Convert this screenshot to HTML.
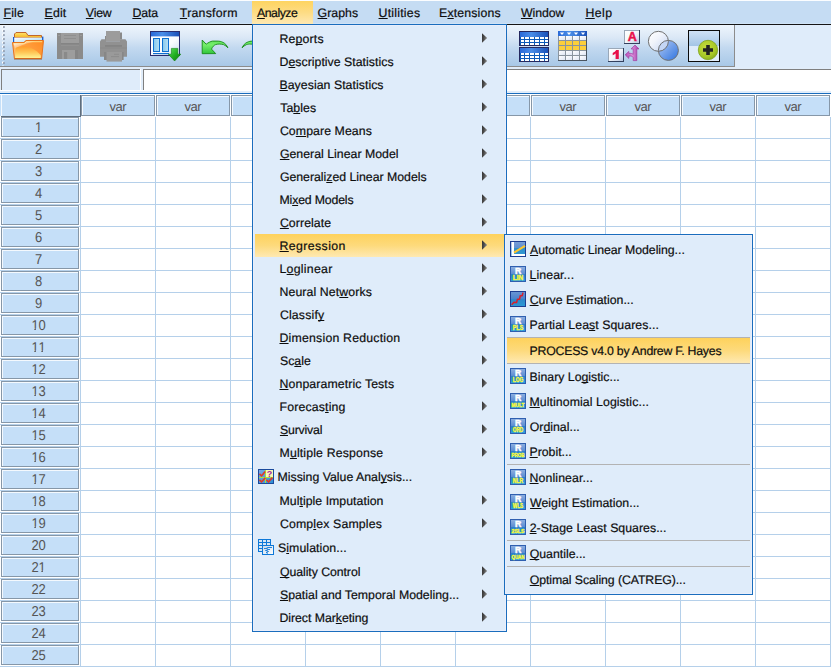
<!DOCTYPE html><html><head><meta charset="utf-8"><title>SPSS</title><style>
html,body{margin:0;padding:0;}
body{width:831px;height:667px;overflow:hidden;background:#fff;position:relative;font-family:"Liberation Sans",sans-serif;font-size:12px;color:#111;}
.a{position:absolute;}
.mb{position:absolute;left:0;top:0;width:831px;height:24px;background:#c5dcf3;}
.t{position:absolute;white-space:nowrap;text-rendering:geometricPrecision;-webkit-text-stroke:0.2px #0d0d0d;font-size:12.3px;color:#0d0d0d;}
u{text-decoration:underline;text-decoration-thickness:1px;text-underline-offset:1px;text-decoration-skip-ink:none;}
.menu{position:absolute;background:#dfecfa;border:1px solid #1a6dbd;box-sizing:border-box;box-shadow:inset 0 0 0 1px #e9eefb;}
.arr{position:absolute;width:5.2px;height:9.6px;clip-path:polygon(0 0,100% 50%,0 100%);background:linear-gradient(100deg,#303030 0%,#4a4a4a 40%,#a0a0a0 100%);}
.hl{position:absolute;background:linear-gradient(#fed25c,#fdda7c 50%,#fee9b2);}
.sep{position:absolute;height:1px;background:#b3b3b3;}
.hd{position:absolute;box-sizing:border-box;background:#c5dff8;border:1px solid #8697a8;box-shadow:inset 1px 1px 0 #f4f9fe;}
.one{display:inline-block;clip-path:polygon(0 0,100% 0,100% 62%,62% 62%,62% 100%,41% 100%,41% 62%,0 62%);}
.ht{position:absolute;color:#555;text-align:center;font-size:13px;text-rendering:geometricPrecision;white-space:nowrap;}
</style></head><body>
<div class="a" style="left:80px;top:117px;width:1px;height:550px;background:#b5d0ea"></div>
<div class="a" style="left:155px;top:117px;width:1px;height:550px;background:#b5d0ea"></div>
<div class="a" style="left:230px;top:117px;width:1px;height:550px;background:#b5d0ea"></div>
<div class="a" style="left:305px;top:117px;width:1px;height:550px;background:#b5d0ea"></div>
<div class="a" style="left:380px;top:117px;width:1px;height:550px;background:#b5d0ea"></div>
<div class="a" style="left:455px;top:117px;width:1px;height:550px;background:#b5d0ea"></div>
<div class="a" style="left:530px;top:117px;width:1px;height:550px;background:#b5d0ea"></div>
<div class="a" style="left:605px;top:117px;width:1px;height:550px;background:#b5d0ea"></div>
<div class="a" style="left:680px;top:117px;width:1px;height:550px;background:#b5d0ea"></div>
<div class="a" style="left:755px;top:117px;width:1px;height:550px;background:#b5d0ea"></div>
<div class="a" style="left:830px;top:117px;width:1px;height:550px;background:#b5d0ea"></div>
<div class="a" style="left:0px;top:138px;width:831px;height:1px;background:#b5d0ea"></div>
<div class="a" style="left:0px;top:160px;width:831px;height:1px;background:#b5d0ea"></div>
<div class="a" style="left:0px;top:182px;width:831px;height:1px;background:#b5d0ea"></div>
<div class="a" style="left:0px;top:204px;width:831px;height:1px;background:#b5d0ea"></div>
<div class="a" style="left:0px;top:226px;width:831px;height:1px;background:#b5d0ea"></div>
<div class="a" style="left:0px;top:248px;width:831px;height:1px;background:#b5d0ea"></div>
<div class="a" style="left:0px;top:270px;width:831px;height:1px;background:#b5d0ea"></div>
<div class="a" style="left:0px;top:292px;width:831px;height:1px;background:#b5d0ea"></div>
<div class="a" style="left:0px;top:314px;width:831px;height:1px;background:#b5d0ea"></div>
<div class="a" style="left:0px;top:336px;width:831px;height:1px;background:#b5d0ea"></div>
<div class="a" style="left:0px;top:358px;width:831px;height:1px;background:#b5d0ea"></div>
<div class="a" style="left:0px;top:380px;width:831px;height:1px;background:#b5d0ea"></div>
<div class="a" style="left:0px;top:402px;width:831px;height:1px;background:#b5d0ea"></div>
<div class="a" style="left:0px;top:424px;width:831px;height:1px;background:#b5d0ea"></div>
<div class="a" style="left:0px;top:446px;width:831px;height:1px;background:#b5d0ea"></div>
<div class="a" style="left:0px;top:468px;width:831px;height:1px;background:#b5d0ea"></div>
<div class="a" style="left:0px;top:490px;width:831px;height:1px;background:#b5d0ea"></div>
<div class="a" style="left:0px;top:512px;width:831px;height:1px;background:#b5d0ea"></div>
<div class="a" style="left:0px;top:534px;width:831px;height:1px;background:#b5d0ea"></div>
<div class="a" style="left:0px;top:556px;width:831px;height:1px;background:#b5d0ea"></div>
<div class="a" style="left:0px;top:578px;width:831px;height:1px;background:#b5d0ea"></div>
<div class="a" style="left:0px;top:600px;width:831px;height:1px;background:#b5d0ea"></div>
<div class="a" style="left:0px;top:622px;width:831px;height:1px;background:#b5d0ea"></div>
<div class="a" style="left:0px;top:644px;width:831px;height:1px;background:#b5d0ea"></div>
<div class="a" style="left:0px;top:666px;width:831px;height:1px;background:#b5d0ea"></div>
<div class="a" style="left:0;top:95px;width:80px;height:21px;background:#c5dff8"></div>
<div class="a" style="left:1px;top:95px;width:1px;height:21px;background:#f4f9fe"></div>
<div class="a" style="left:80px;top:95px;width:1px;height:22px;background:#5f6d7c"></div>
<div class="a" style="left:1px;top:116px;width:80px;height:1px;background:#5f6d7c"></div>
<div class="hd" style="left:81px;top:95px;width:74px;height:21px"></div><div class="ht" style="left:81px;top:96px;width:73.5px;height:21px;line-height:21px;letter-spacing:-0.5px">var</div>
<div class="hd" style="left:156px;top:95px;width:74px;height:21px"></div><div class="ht" style="left:156px;top:96px;width:73.5px;height:21px;line-height:21px;letter-spacing:-0.5px">var</div>
<div class="hd" style="left:231px;top:95px;width:74px;height:21px"></div><div class="ht" style="left:231px;top:96px;width:73.5px;height:21px;line-height:21px;letter-spacing:-0.5px">var</div>
<div class="hd" style="left:306px;top:95px;width:74px;height:21px"></div><div class="ht" style="left:306px;top:96px;width:73.5px;height:21px;line-height:21px;letter-spacing:-0.5px">var</div>
<div class="hd" style="left:381px;top:95px;width:74px;height:21px"></div><div class="ht" style="left:381px;top:96px;width:73.5px;height:21px;line-height:21px;letter-spacing:-0.5px">var</div>
<div class="hd" style="left:456px;top:95px;width:74px;height:21px"></div><div class="ht" style="left:456px;top:96px;width:73.5px;height:21px;line-height:21px;letter-spacing:-0.5px">var</div>
<div class="hd" style="left:531px;top:95px;width:74px;height:21px"></div><div class="ht" style="left:531px;top:96px;width:73.5px;height:21px;line-height:21px;letter-spacing:-0.5px">var</div>
<div class="hd" style="left:606px;top:95px;width:74px;height:21px"></div><div class="ht" style="left:606px;top:96px;width:73.5px;height:21px;line-height:21px;letter-spacing:-0.5px">var</div>
<div class="hd" style="left:681px;top:95px;width:74px;height:21px"></div><div class="ht" style="left:681px;top:96px;width:73.5px;height:21px;line-height:21px;letter-spacing:-0.5px">var</div>
<div class="hd" style="left:756px;top:95px;width:74px;height:21px"></div><div class="ht" style="left:756px;top:96px;width:73.5px;height:21px;line-height:21px;letter-spacing:-0.5px">var</div>
<div class="hd" style="left:1px;top:117px;width:78px;height:20px"></div><div class="ht" style="left:0px;top:118px;width:77px;height:20px;line-height:20px;letter-spacing:-0.2px;transform-origin:50% 14px;transform:scaleY(1.1)"><span class=one>1</span></div>
<div class="hd" style="left:1px;top:139px;width:78px;height:20px"></div><div class="ht" style="left:0px;top:140px;width:77px;height:20px;line-height:20px;letter-spacing:-0.2px;transform-origin:50% 14px;transform:scaleY(1.1)">2</div>
<div class="hd" style="left:1px;top:161px;width:78px;height:20px"></div><div class="ht" style="left:0px;top:162px;width:77px;height:20px;line-height:20px;letter-spacing:-0.2px;transform-origin:50% 14px;transform:scaleY(1.1)">3</div>
<div class="hd" style="left:1px;top:183px;width:78px;height:20px"></div><div class="ht" style="left:0px;top:184px;width:77px;height:20px;line-height:20px;letter-spacing:-0.2px;transform-origin:50% 14px;transform:scaleY(1.1)">4</div>
<div class="hd" style="left:1px;top:205px;width:78px;height:20px"></div><div class="ht" style="left:0px;top:206px;width:77px;height:20px;line-height:20px;letter-spacing:-0.2px;transform-origin:50% 14px;transform:scaleY(1.1)">5</div>
<div class="hd" style="left:1px;top:227px;width:78px;height:20px"></div><div class="ht" style="left:0px;top:228px;width:77px;height:20px;line-height:20px;letter-spacing:-0.2px;transform-origin:50% 14px;transform:scaleY(1.1)">6</div>
<div class="hd" style="left:1px;top:249px;width:78px;height:20px"></div><div class="ht" style="left:0px;top:250px;width:77px;height:20px;line-height:20px;letter-spacing:-0.2px;transform-origin:50% 14px;transform:scaleY(1.1)">7</div>
<div class="hd" style="left:1px;top:271px;width:78px;height:20px"></div><div class="ht" style="left:0px;top:272px;width:77px;height:20px;line-height:20px;letter-spacing:-0.2px;transform-origin:50% 14px;transform:scaleY(1.1)">8</div>
<div class="hd" style="left:1px;top:293px;width:78px;height:20px"></div><div class="ht" style="left:0px;top:294px;width:77px;height:20px;line-height:20px;letter-spacing:-0.2px;transform-origin:50% 14px;transform:scaleY(1.1)">9</div>
<div class="hd" style="left:1px;top:315px;width:78px;height:20px"></div><div class="ht" style="left:0px;top:316px;width:77px;height:20px;line-height:20px;letter-spacing:-0.2px;transform-origin:50% 14px;transform:scaleY(1.1)"><span class=one>1</span>0</div>
<div class="hd" style="left:1px;top:337px;width:78px;height:20px"></div><div class="ht" style="left:0px;top:338px;width:77px;height:20px;line-height:20px;letter-spacing:-0.2px;transform-origin:50% 14px;transform:scaleY(1.1)"><span class=one>1</span><span class=one>1</span></div>
<div class="hd" style="left:1px;top:359px;width:78px;height:20px"></div><div class="ht" style="left:0px;top:360px;width:77px;height:20px;line-height:20px;letter-spacing:-0.2px;transform-origin:50% 14px;transform:scaleY(1.1)"><span class=one>1</span>2</div>
<div class="hd" style="left:1px;top:381px;width:78px;height:20px"></div><div class="ht" style="left:0px;top:382px;width:77px;height:20px;line-height:20px;letter-spacing:-0.2px;transform-origin:50% 14px;transform:scaleY(1.1)"><span class=one>1</span>3</div>
<div class="hd" style="left:1px;top:403px;width:78px;height:20px"></div><div class="ht" style="left:0px;top:404px;width:77px;height:20px;line-height:20px;letter-spacing:-0.2px;transform-origin:50% 14px;transform:scaleY(1.1)"><span class=one>1</span>4</div>
<div class="hd" style="left:1px;top:425px;width:78px;height:20px"></div><div class="ht" style="left:0px;top:426px;width:77px;height:20px;line-height:20px;letter-spacing:-0.2px;transform-origin:50% 14px;transform:scaleY(1.1)"><span class=one>1</span>5</div>
<div class="hd" style="left:1px;top:447px;width:78px;height:20px"></div><div class="ht" style="left:0px;top:448px;width:77px;height:20px;line-height:20px;letter-spacing:-0.2px;transform-origin:50% 14px;transform:scaleY(1.1)"><span class=one>1</span>6</div>
<div class="hd" style="left:1px;top:469px;width:78px;height:20px"></div><div class="ht" style="left:0px;top:470px;width:77px;height:20px;line-height:20px;letter-spacing:-0.2px;transform-origin:50% 14px;transform:scaleY(1.1)"><span class=one>1</span>7</div>
<div class="hd" style="left:1px;top:491px;width:78px;height:20px"></div><div class="ht" style="left:0px;top:492px;width:77px;height:20px;line-height:20px;letter-spacing:-0.2px;transform-origin:50% 14px;transform:scaleY(1.1)"><span class=one>1</span>8</div>
<div class="hd" style="left:1px;top:513px;width:78px;height:20px"></div><div class="ht" style="left:0px;top:514px;width:77px;height:20px;line-height:20px;letter-spacing:-0.2px;transform-origin:50% 14px;transform:scaleY(1.1)"><span class=one>1</span>9</div>
<div class="hd" style="left:1px;top:535px;width:78px;height:20px"></div><div class="ht" style="left:0px;top:536px;width:77px;height:20px;line-height:20px;letter-spacing:-0.2px;transform-origin:50% 14px;transform:scaleY(1.1)">20</div>
<div class="hd" style="left:1px;top:557px;width:78px;height:20px"></div><div class="ht" style="left:0px;top:558px;width:77px;height:20px;line-height:20px;letter-spacing:-0.2px;transform-origin:50% 14px;transform:scaleY(1.1)">2<span class=one>1</span></div>
<div class="hd" style="left:1px;top:579px;width:78px;height:20px"></div><div class="ht" style="left:0px;top:580px;width:77px;height:20px;line-height:20px;letter-spacing:-0.2px;transform-origin:50% 14px;transform:scaleY(1.1)">22</div>
<div class="hd" style="left:1px;top:601px;width:78px;height:20px"></div><div class="ht" style="left:0px;top:602px;width:77px;height:20px;line-height:20px;letter-spacing:-0.2px;transform-origin:50% 14px;transform:scaleY(1.1)">23</div>
<div class="hd" style="left:1px;top:623px;width:78px;height:20px"></div><div class="ht" style="left:0px;top:624px;width:77px;height:20px;line-height:20px;letter-spacing:-0.2px;transform-origin:50% 14px;transform:scaleY(1.1)">24</div>
<div class="hd" style="left:1px;top:645px;width:78px;height:20px"></div><div class="ht" style="left:0px;top:646px;width:77px;height:20px;line-height:20px;letter-spacing:-0.2px;transform-origin:50% 14px;transform:scaleY(1.1)">25</div>
<div class="a" style="left:0;top:67px;width:831px;height:26px;background:#e1edfa"></div>
<div class="a" style="left:0;top:90px;width:831px;height:1px;background:#fff"></div>
<div class="a" style="left:1px;top:69px;width:139px;height:21px;background:#dfecfa;border-left:1px solid #7f7f7f;border-top:1px solid #7f7f7f;box-sizing:border-box"></div>
<div class="a" style="left:140px;top:69px;width:1px;height:22px;background:#fff"></div>
<div class="a" style="left:143px;top:69px;width:688px;height:21px;background:#fff;border-left:1px solid #7f7f7f;border-top:1px solid #7f7f7f;box-sizing:border-box"></div>
<div class="a" style="left:0;top:93px;width:831px;height:1px;background:#1a6dbd"></div>
<div class="a" style="left:0;top:94px;width:831px;height:1px;background:#fff"></div>
<div class="a" style="left:0;top:25px;width:831px;height:42px;background:#dfecfa"></div>
<div class="a" style="left:0;top:25px;width:734px;height:41px;background:linear-gradient(#eef5fc 0%,#dbe8f6 30%,#c3d9f0 55%,#a8c8e7 100%)"></div>
<div class="a" style="left:0;top:66px;width:735px;height:1px;background:#8c8c8c"></div>
<div class="a" style="left:734px;top:25px;width:1px;height:42px;background:#8c8c8c"></div>
<svg class="a" style="left:0;top:25px" width="8" height="41" viewBox="0 25 8 41"><rect x="2" y="25.6" width="1.9" height="1.9" fill="#fff"/><rect x="3" y="26.2" width="1.8" height="1.7" fill="#8e99ab"/><rect x="2" y="29.6" width="1.9" height="1.9" fill="#fff"/><rect x="3" y="30.2" width="1.8" height="1.7" fill="#8e99ab"/><rect x="2" y="33.6" width="1.9" height="1.9" fill="#fff"/><rect x="3" y="34.2" width="1.8" height="1.7" fill="#8e99ab"/><rect x="2" y="37.6" width="1.9" height="1.9" fill="#fff"/><rect x="3" y="38.2" width="1.8" height="1.7" fill="#8e99ab"/><rect x="2" y="41.6" width="1.9" height="1.9" fill="#fff"/><rect x="3" y="42.2" width="1.8" height="1.7" fill="#8e99ab"/><rect x="2" y="45.6" width="1.9" height="1.9" fill="#fff"/><rect x="3" y="46.2" width="1.8" height="1.7" fill="#8e99ab"/><rect x="2" y="49.6" width="1.9" height="1.9" fill="#fff"/><rect x="3" y="50.2" width="1.8" height="1.7" fill="#8e99ab"/><rect x="2" y="53.6" width="1.9" height="1.9" fill="#fff"/><rect x="3" y="54.2" width="1.8" height="1.7" fill="#8e99ab"/><rect x="2" y="57.6" width="1.9" height="1.9" fill="#fff"/><rect x="3" y="58.2" width="1.8" height="1.7" fill="#8e99ab"/><rect x="2" y="61.6" width="1.9" height="1.9" fill="#fff"/><rect x="3" y="62.2" width="1.8" height="1.7" fill="#8e99ab"/><rect x="2" y="65.6" width="1.9" height="1.9" fill="#fff"/><rect x="3" y="66.2" width="1.8" height="1.7" fill="#8e99ab"/></svg>
<svg width="0" height="0" style="position:absolute"><defs><linearGradient id="gR1" x1="0" y1="0" x2="0" y2="1"><stop offset="0" stop-color="#8fb0e0"/><stop offset="0.5" stop-color="#5b8cd2"/><stop offset="0.5" stop-color="#2d7fc8"/><stop offset="1" stop-color="#2aa4dc"/></linearGradient><linearGradient id="gA1" x1="0" y1="0" x2="0" y2="1"><stop offset="0" stop-color="#7a9fd6"/><stop offset="0.45" stop-color="#5d8fd0"/><stop offset="0.45" stop-color="#2f8fcc"/><stop offset="1" stop-color="#2e9ad4"/></linearGradient><linearGradient id="gV1" x1="0" y1="0" x2="0" y2="1"><stop offset="0" stop-color="#6a95d4"/><stop offset="0.5" stop-color="#4a82cc"/><stop offset="0.5" stop-color="#2d86ca"/><stop offset="1" stop-color="#2a9ad6"/></linearGradient><linearGradient id="gM1" x1="0" y1="0" x2="1" y2="1"><stop offset="0" stop-color="#7aa8e4"/><stop offset="1" stop-color="#2a8ed4"/></linearGradient><linearGradient id="gS1" x1="0" y1="0" x2="1" y2="1"><stop offset="0" stop-color="#c8d8e8"/><stop offset="1" stop-color="#ffffff"/></linearGradient><linearGradient id="gS1" x1="0" y1="0" x2="1" y2="1"><stop offset="0" stop-color="#c8d8e8"/><stop offset="1" stop-color="#ffffff"/></linearGradient></defs></svg>
<svg class="a" style="left:0;top:25px" width="831" height="42" viewBox="0 25 831 42">
<defs>
<linearGradient id="gFb" x1="0" y1="0" x2="0" y2="1"><stop offset="0" stop-color="#ffe36e"/><stop offset="1" stop-color="#f6b21c"/></linearGradient>
<linearGradient id="gFf" x1="1" y1="0" x2="0" y2="0.6"><stop offset="0" stop-color="#ff8a22"/><stop offset="0.6" stop-color="#ffa040"/><stop offset="1" stop-color="#ffc070"/></linearGradient>
<linearGradient id="gFg" x1="0" y1="0" x2="0" y2="1"><stop offset="0" stop-color="#ff9a2a"/><stop offset="0.55" stop-color="#ffc858"/><stop offset="1" stop-color="#fff292"/></linearGradient>
<linearGradient id="gFh" x1="0" y1="0" x2="1" y2="1"><stop offset="0" stop-color="#fff" stop-opacity="0.95"/><stop offset="0.6" stop-color="#fff" stop-opacity="0"/></linearGradient>
<linearGradient id="gPap" x1="0" y1="0" x2="1" y2="1"><stop offset="0" stop-color="#ffffff"/><stop offset="1" stop-color="#9fd6f5"/></linearGradient>
<linearGradient id="gTitle" x1="0" y1="0" x2="1" y2="0"><stop offset="0" stop-color="#2a6ad8"/><stop offset="0.4" stop-color="#4a8ee8"/><stop offset="1" stop-color="#1a50b8"/></linearGradient>
<linearGradient id="gWin" x1="0" y1="0" x2="1" y2="1"><stop offset="0" stop-color="#ffffff"/><stop offset="0.6" stop-color="#fafcff"/><stop offset="1" stop-color="#c8dcf0"/></linearGradient>
<linearGradient id="gCol" x1="0" y1="0" x2="1" y2="0"><stop offset="0" stop-color="#86c8ec"/><stop offset="1" stop-color="#b8e0f6"/></linearGradient>
<linearGradient id="gGrn" x1="0" y1="0" x2="1" y2="1"><stop offset="0" stop-color="#5fe05f"/><stop offset="0.5" stop-color="#22b022"/><stop offset="1" stop-color="#0c7a0c"/></linearGradient>
<linearGradient id="gUndo" x1="0" y1="0" x2="0" y2="1"><stop offset="0" stop-color="#62e25a"/><stop offset="0.35" stop-color="#74ee6c"/><stop offset="1" stop-color="#30c63a"/></linearGradient>
<linearGradient id="gCell" x1="0" y1="0" x2="1" y2="1"><stop offset="0" stop-color="#ffffff"/><stop offset="1" stop-color="#dfe6f4"/></linearGradient>
<linearGradient id="gBox" x1="0" y1="0" x2="1" y2="1"><stop offset="0" stop-color="#ffffff"/><stop offset="0.5" stop-color="#f4f6fb"/><stop offset="1" stop-color="#b9c8e2"/></linearGradient>
<linearGradient id="gC1" x1="0" y1="0" x2="1" y2="1"><stop offset="0" stop-color="#ffffff"/><stop offset="0.4" stop-color="#f1f4fb"/><stop offset="1" stop-color="#bfd2f3"/></linearGradient>
<linearGradient id="gC2" x1="0" y1="0" x2="1" y2="1"><stop offset="0" stop-color="#b4cbf3"/><stop offset="1" stop-color="#2e73e0"/></linearGradient>
<linearGradient id="gSel" x1="0" y1="0" x2="0" y2="1"><stop offset="0" stop-color="#cfe1f5"/><stop offset="1" stop-color="#a3c5e6"/></linearGradient>
<radialGradient id="gPlus" cx="0.4" cy="0.35" r="0.7"><stop offset="0" stop-color="#c5dc3c"/><stop offset="0.7" stop-color="#a6c727"/><stop offset="1" stop-color="#86ac1c"/></radialGradient>
<linearGradient id="gPur" x1="0" y1="0" x2="1" y2="0"><stop offset="0" stop-color="#b44ab4"/><stop offset="0.5" stop-color="#dc92dc"/><stop offset="1" stop-color="#a63aa6"/></linearGradient>
</defs>
<path d="M14.5 37.5 L14.5 34 L16 32.5 L26 32.5 L28 35.5 L41.5 35.5 L41.5 38 Z" fill="url(#gFb)" stroke="#c0662b" stroke-width="1"/>
<rect x="13" y="37" width="1.4" height="5.5" fill="#1a5fd0"/><rect x="42" y="36.6" width="1.4" height="4" fill="#1a5fd0"/>
<rect x="14.4" y="37.6" width="27.6" height="5" fill="url(#gPap)"/>
<path d="M12.5 42.5 L24 42.5 L25.8 40.5 L43.5 40.5 L41.6 58.5 L14.4 58.5 Z" fill="url(#gFf)" stroke="#e8731c" stroke-width="1" stroke-linejoin="round"/>
<path d="M13.7 43.7 L24.5 43.7 L26.3 41.7 L42.2 41.7" fill="none" stroke="#ffe68a" stroke-width="0.9"/>
<path d="M13.5 43.5 L24.4 43.5 L26.2 41.5 L36 41.5 C28 43 19 45 15.4 50 Z" fill="url(#gFh)"/>
<path d="M15.1 57.9 L15.5 48 C21 44.6 33 45.2 40.9 55.5 L40.7 57.9 Z" fill="url(#gFg)"/>
<rect x="14" y="58.7" width="28" height="0.9" fill="#8a4a18" opacity="0.7"/>
<rect x="57" y="33" width="26" height="26" fill="#8b8b8b"/>
<rect x="61" y="33" width="18" height="10" fill="#9d9d9d"/>
<rect x="64" y="35" width="12" height="1" fill="#8f8f8f"/><rect x="64" y="38" width="12" height="1" fill="#8f8f8f"/>
<rect x="61" y="43" width="18" height="1.2" fill="#848484"/><rect x="61" y="45" width="18" height="1" fill="#929292"/>
<rect x="62" y="50" width="13" height="9" fill="#9d9d9d"/><rect x="64" y="52" width="3.2" height="7" fill="#8a8a8a"/><rect x="75" y="50" width="3" height="9" fill="#858585"/>
<rect x="58" y="35" width="2" height="1" fill="#9a9a9a"/><rect x="80" y="35" width="2" height="1" fill="#9a9a9a"/>
<rect x="120" y="32.5" width="2" height="7" fill="#8a8a8a"/><rect x="105" y="36" width="1.5" height="4" fill="#8a8a8a"/>
<rect x="106" y="31" width="14" height="10.2" fill="#9c9c9c"/>
<path d="M101.5 39.2 L106 39.2 L106 41.2 L120 41.2 L120 39.2 L125.5 39.2 L127 41.5 L127 56.8 L100 56.8 L100 41.5 Z" fill="#919191"/>
<rect x="105" y="45" width="17" height="1.8" fill="#848484"/><rect x="100" y="47.5" width="27" height="1" fill="#8a8a8a"/>
<rect x="104" y="52" width="19.6" height="8" fill="#878787"/><rect x="106.5" y="52" width="15.5" height="9.6" fill="#9a9a9a"/>
<rect x="114" y="53.8" width="5" height="0.9" fill="#8a8a8a"/><rect x="111" y="56.2" width="8" height="0.9" fill="#8a8a8a"/>
<rect x="150.5" y="31.5" width="29" height="24" fill="url(#gWin)" stroke="#2a2d6e" stroke-width="1"/>
<rect x="151" y="32" width="28" height="4.4" fill="url(#gTitle)"/>
<rect x="153.5" y="38.5" width="6" height="13" fill="url(#gCol)" stroke="#0e6fd0" stroke-width="1"/>
<rect x="162.5" y="38.5" width="6" height="13" fill="url(#gCol)" stroke="#0e6fd0" stroke-width="1"/>
<rect x="153" y="53" width="16" height="1.2" fill="#0e6fd0"/>
<path d="M171.4 48.4 L177.8 48.4 L177.8 54.2 L180.8 54.2 L174.6 61 L168.4 54.2 L171.4 54.2 Z" fill="url(#gGrn)" stroke="#0d7d0d" stroke-width="0.6"/>
<path d="M202.2 40 L202.2 53.7 L215.7 53.6 L211.5 49.1 C212.5 46.8 214 45.2 215.6 44.6 C217.5 43.9 220.5 43.8 223.5 44.6 C225.3 45.3 226.8 46.5 227.9 47.8 C226.8 45.2 225 43.3 223 42.4 C221 41.4 219.5 41.1 217 41.1 L212.5 41.1 C210.5 41.4 208 42.8 206.2 44.2 Z" fill="url(#gUndo)" stroke="#168a16" stroke-width="0.9" stroke-linejoin="round"/>
<path d="M242.1 47.8 C243.2 45.2 245 43.3 247 42.4 C249 41.4 250.5 41.1 253 41.1 L256 41.1 L256 44.2 L251 44.1 C249 43.9 248 44.2 246.5 44.6 C244.7 45.3 243.2 46.5 242.1 47.8 Z" fill="url(#gUndo)" stroke="#168a16" stroke-width="0.9"/>
<rect x="519.5" y="31.5" width="29" height="14" fill="#0d5ab8" stroke="#25285e" stroke-width="1"/>
<rect x="520" y="32" width="28" height="5" fill="url(#gTitle)"/>
<rect x="521" y="37" width="3" height="2" fill="#fff"/>
<rect x="525" y="37" width="4" height="2" fill="#fff"/>
<rect x="530" y="37" width="4" height="2" fill="#fff"/>
<rect x="535" y="37" width="4" height="2" fill="#fff"/>
<rect x="540" y="37" width="4" height="2" fill="#fff"/>
<rect x="545" y="37" width="3" height="2" fill="#fff"/>
<rect x="521" y="40" width="3" height="2" fill="#fff"/>
<rect x="525" y="40" width="4" height="2" fill="#fff"/>
<rect x="530" y="40" width="4" height="2" fill="#fff"/>
<rect x="535" y="40" width="4" height="2" fill="#fff"/>
<rect x="540" y="40" width="4" height="2" fill="#fff"/>
<rect x="545" y="40" width="3" height="2" fill="#fff"/>
<rect x="521" y="43" width="3" height="2" fill="#fff"/>
<rect x="525" y="43" width="4" height="2" fill="#fff"/>
<rect x="530" y="43" width="4" height="2" fill="#fff"/>
<rect x="535" y="43" width="4" height="2" fill="#fff"/>
<rect x="540" y="43" width="4" height="2" fill="#fff"/>
<rect x="545" y="43" width="3" height="2" fill="#fff"/>
<rect x="519.5" y="47.5" width="29" height="14" fill="#0d5ab8" stroke="#25285e" stroke-width="1"/>
<rect x="520" y="48" width="28" height="5" fill="url(#gTitle)"/>
<rect x="521" y="53" width="3" height="2" fill="#fff"/>
<rect x="525" y="53" width="4" height="2" fill="#fff"/>
<rect x="530" y="53" width="4" height="2" fill="#fff"/>
<rect x="535" y="53" width="4" height="2" fill="#fff"/>
<rect x="540" y="53" width="4" height="2" fill="#fff"/>
<rect x="545" y="53" width="3" height="2" fill="#fff"/>
<rect x="521" y="56" width="3" height="2" fill="#fff"/>
<rect x="525" y="56" width="4" height="2" fill="#fff"/>
<rect x="530" y="56" width="4" height="2" fill="#fff"/>
<rect x="535" y="56" width="4" height="2" fill="#fff"/>
<rect x="540" y="56" width="4" height="2" fill="#fff"/>
<rect x="545" y="56" width="3" height="2" fill="#fff"/>
<rect x="521" y="59" width="3" height="2" fill="#fff"/>
<rect x="525" y="59" width="4" height="2" fill="#fff"/>
<rect x="530" y="59" width="4" height="2" fill="#fff"/>
<rect x="535" y="59" width="4" height="2" fill="#fff"/>
<rect x="540" y="59" width="4" height="2" fill="#fff"/>
<rect x="545" y="59" width="3" height="2" fill="#fff"/>
<rect x="558" y="31" width="29" height="30" fill="#8a949e"/>
<rect x="586" y="36" width="1" height="25" fill="#4a5560"/><rect x="558" y="60" width="29" height="1" fill="#4a5560"/>
<rect x="558" y="31" width="29" height="5" fill="url(#gTitle)"/>
<path d="M559.8 32.4 L564.2 32.4 L562 35 Z" fill="#fff"/>
<rect x="559" y="36" width="6" height="4" fill="url(#gCell)"/>
<rect x="559" y="41" width="6" height="4" fill="#fccf3a"/>
<rect x="559" y="46" width="6" height="4" fill="#fccf3a"/>
<rect x="559" y="51" width="6" height="4" fill="url(#gCell)"/>
<rect x="559" y="56" width="6" height="4" fill="url(#gCell)"/>
<path d="M566.8 32.4 L571.2 32.4 L569 35 Z" fill="#fff"/>
<rect x="566" y="36" width="6" height="4" fill="url(#gCell)"/>
<rect x="566" y="41" width="6" height="4" fill="#fccf3a"/>
<rect x="566" y="46" width="6" height="4" fill="#fccf3a"/>
<rect x="566" y="51" width="6" height="4" fill="url(#gCell)"/>
<rect x="566" y="56" width="6" height="4" fill="url(#gCell)"/>
<path d="M573.8 32.4 L578.2 32.4 L576 35 Z" fill="#fff"/>
<rect x="573" y="36" width="6" height="4" fill="url(#gCell)"/>
<rect x="573" y="41" width="6" height="4" fill="#fccf3a"/>
<rect x="573" y="46" width="6" height="4" fill="#fccf3a"/>
<rect x="573" y="51" width="6" height="4" fill="url(#gCell)"/>
<rect x="573" y="56" width="6" height="4" fill="url(#gCell)"/>
<path d="M580.8 32.4 L585.2 32.4 L583 35 Z" fill="#fff"/>
<rect x="580" y="36" width="6" height="4" fill="url(#gCell)"/>
<rect x="580" y="41" width="6" height="4" fill="#fccf3a"/>
<rect x="580" y="46" width="6" height="4" fill="#fccf3a"/>
<rect x="580" y="51" width="6" height="4" fill="url(#gCell)"/>
<rect x="580" y="56" width="6" height="4" fill="url(#gCell)"/>
<rect x="624" y="30" width="16" height="14" fill="#33415f"/><rect x="624" y="30" width="15" height="13" fill="#9aa8b8"/><rect x="625" y="31" width="14" height="12" fill="url(#gBox)"/>
<rect x="608" y="48" width="16" height="14" fill="#33415f"/><rect x="608" y="48" width="15" height="13" fill="#9aa8b8"/><rect x="609" y="49" width="14" height="12" fill="url(#gBox)"/>
<text x="632.2" y="41.1" font-family="Liberation Sans" font-weight="bold" font-size="12.6" fill="#e8104a" stroke="#e8104a" stroke-width="0.5" text-anchor="middle">A</text>
<path d="M618.8 50 L618.8 59.1 L615.6 59.1 L615.6 53.6 C614.8 54.4 613.8 55 612.7 55.3 L612.7 52.9 C614.2 52.3 615.6 51.2 616.2 50 Z" fill="#e8104a"/>
<path d="M635 45.1 L639 48.9 L636.8 48.9 L636.8 60.6 L633.2 60.6 L633.2 57.6 C632.5 56.2 631 55.8 628.8 56 L628.8 58.4 L625.2 54.8 L628.8 51.4 L628.8 53.4 C631 53.2 632.6 53.6 633.2 54.4 L633.2 48.9 L631 48.9 Z" fill="url(#gPur)" stroke="#a03aa0" stroke-width="0.7" stroke-linejoin="round"/>
<circle cx="658.4" cy="41.3" r="10" fill="url(#gC1)"/>
<circle cx="668.4" cy="50.4" r="10" fill="url(#gC2)"/>
<clipPath id="cpA"><circle cx="658.4" cy="41.3" r="10"/></clipPath>
<circle cx="668.4" cy="50.4" r="10" fill="#c4d6f5" clip-path="url(#cpA)"/>
<circle cx="658.4" cy="41.3" r="10" fill="none" stroke="#707070" stroke-width="1"/>
<circle cx="668.4" cy="50.4" r="10" fill="none" stroke="#707070" stroke-width="1"/>
<rect x="688.5" y="30.5" width="31" height="31" fill="#dfecfa" stroke="#0a0a0a" stroke-width="1"/>
<rect x="689" y="31" width="30" height="15" fill="url(#gSel)"/>
<circle cx="708" cy="50" r="9.7" fill="url(#gPlus)" stroke="#7da31a" stroke-width="0.8"/>
<path d="M706.2 45 L709.8 45 L709.8 48.2 L713 48.2 L713 51.8 L709.8 51.8 L709.8 55 L706.2 55 L706.2 51.8 L703 51.8 L703 48.2 L706.2 48.2 Z" fill="#222"/>
</svg>
<div class="mb">
<div class="a" style="left:0;top:0;width:831px;height:1px;background:#fbfdff"></div><div class="a" style="left:0;top:23px;width:831px;height:1px;background:#cfe3f6"></div>
<div class="hl" style="left:252px;top:1px;width:61px;height:23px;background:linear-gradient(#fed460,#fddc84 50%,#fee8b2)"></div>
<div class="t" style="left:3.49px;top:1px;height:24px;line-height:24px;letter-spacing:0.179px;"><u>F</u>ile</div>
<div class="t" style="left:44.59px;top:1px;height:24px;line-height:24px;letter-spacing:0.135px;"><u>E</u>dit</div>
<div class="t" style="left:85.85px;top:1px;height:24px;line-height:24px;letter-spacing:-0.212px;"><u>V</u>iew</div>
<div class="t" style="left:132.39px;top:1px;height:24px;line-height:24px;letter-spacing:-0.057px;"><u>D</u>ata</div>
<div class="t" style="left:179.82px;top:1px;height:24px;line-height:24px;letter-spacing:0.256px;"><u>T</u>ransform</div>
<div class="t" style="left:257.08px;top:1px;height:24px;line-height:24px;letter-spacing:-0.515px;"><u>A</u>nalyze</div>
<div class="t" style="left:317.58px;top:1px;height:24px;line-height:24px;letter-spacing:0.046px;"><u>G</u>raphs</div>
<div class="t" style="left:378.55px;top:1px;height:24px;line-height:24px;letter-spacing:0.232px;"><u>U</u>tilities</div>
<div class="t" style="left:439.09px;top:1px;height:24px;line-height:24px;letter-spacing:0.154px;">E<u>x</u>tensions</div>
<div class="t" style="left:520.95px;top:1px;height:24px;line-height:24px;letter-spacing:-0.045px;"><u>W</u>indow</div>
<div class="t" style="left:585.39px;top:1px;height:24px;line-height:24px;letter-spacing:0.476px;"><u>H</u>elp</div>
</div>
<div class="a" style="left:0;top:24px;width:831px;height:1px;background:#151515"></div>
<div class="menu" style="left:252px;top:24px;width:255px;height:608px">
<div class="t" style="left:26.49px;top:3px;height:23px;line-height:23px;letter-spacing:0.164px;">Re<u>p</u>orts</div>
<div class="arr" style="left:229px;top:8.2px"></div>
<div class="t" style="left:26.49px;top:26px;height:23px;line-height:23px;letter-spacing:0.028px;">D<u>e</u>scriptive Statistics</div>
<div class="arr" style="left:229px;top:31.2px"></div>
<div class="t" style="left:26.49px;top:49px;height:23px;line-height:23px;letter-spacing:0.046px;"><u>B</u>ayesian Statistics</div>
<div class="arr" style="left:229px;top:54.2px"></div>
<div class="t" style="left:27.22px;top:72px;height:23px;line-height:23px;letter-spacing:0.061px;">Ta<u>b</u>les</div>
<div class="arr" style="left:229px;top:77.2px"></div>
<div class="t" style="left:26.88px;top:95px;height:23px;line-height:23px;letter-spacing:0.087px;">Co<u>m</u>pare Means</div>
<div class="arr" style="left:229px;top:100.2px"></div>
<div class="t" style="left:26.88px;top:118px;height:23px;line-height:23px;letter-spacing:0.019px;"><u>G</u>eneral Linear Model</div>
<div class="arr" style="left:229px;top:123.2px"></div>
<div class="t" style="left:26.88px;top:141px;height:23px;line-height:23px;letter-spacing:-0.010px;">Generali<u>z</u>ed Linear Models</div>
<div class="arr" style="left:229px;top:146.2px"></div>
<div class="t" style="left:26.49px;top:164px;height:23px;line-height:23px;letter-spacing:-0.166px;">Mi<u>x</u>ed Models</div>
<div class="arr" style="left:229px;top:169.2px"></div>
<div class="t" style="left:26.88px;top:187px;height:23px;line-height:23px;letter-spacing:0.085px;"><u>C</u>orrelate</div>
<div class="arr" style="left:229px;top:192.2px"></div>
<div class="hl" style="left:2px;top:209px;width:249px;height:23px"></div>
<div class="t" style="left:26.49px;top:210px;height:23px;line-height:23px;letter-spacing:0.410px;"><u>R</u>egression</div>
<div class="arr" style="left:229px;top:215.2px"></div>
<div class="t" style="left:26.49px;top:233px;height:23px;line-height:23px;letter-spacing:0.276px;">L<u>o</u>glinear</div>
<div class="arr" style="left:229px;top:238.2px"></div>
<div class="t" style="left:26.49px;top:256px;height:23px;line-height:23px;letter-spacing:0.103px;">Neural Net<u>w</u>orks</div>
<div class="arr" style="left:229px;top:261.2px"></div>
<div class="t" style="left:26.88px;top:279px;height:23px;line-height:23px;letter-spacing:0.170px;">Classif<u>y</u></div>
<div class="arr" style="left:229px;top:284.2px"></div>
<div class="t" style="left:26.49px;top:302px;height:23px;line-height:23px;letter-spacing:0.211px;"><u>D</u>imension Reduction</div>
<div class="arr" style="left:229px;top:307.2px"></div>
<div class="t" style="left:26.94px;top:325px;height:23px;line-height:23px;letter-spacing:0.034px;">Sc<u>a</u>le</div>
<div class="arr" style="left:229px;top:330.2px"></div>
<div class="t" style="left:26.49px;top:348px;height:23px;line-height:23px;letter-spacing:0.111px;"><u>N</u>onparametric Tests</div>
<div class="arr" style="left:229px;top:353.2px"></div>
<div class="t" style="left:26.49px;top:371px;height:23px;line-height:23px;letter-spacing:0.164px;">Forecas<u>t</u>ing</div>
<div class="arr" style="left:229px;top:376.2px"></div>
<div class="t" style="left:26.94px;top:394px;height:23px;line-height:23px;letter-spacing:-0.181px;"><u>S</u>urvival</div>
<div class="arr" style="left:229px;top:399.2px"></div>
<div class="t" style="left:26.49px;top:417px;height:23px;line-height:23px;letter-spacing:0.154px;">M<u>u</u>ltiple Response</div>
<div class="arr" style="left:229px;top:422.2px"></div>
<div class="t" style="left:24.49px;top:440px;height:25px;line-height:25px;letter-spacing:0.012px;">Missing Value Anal<u>y</u>sis...</div>
<svg class="a" style="left:5px;top:444px" width="16" height="15" viewBox="0 0 16 15"><rect x="0.5" y="0.5" width="15" height="14" fill="url(#gM1)" stroke="#1a4a9c" stroke-width="1"/><rect x="8" y="1" width="7" height="7" fill="#f8f8b4"/><rect x="7" y="1" width="1" height="13" fill="#a6e23c"/><rect x="1" y="8" width="14" height="1" fill="#a6e23c"/><path d="M1.4 4.8 L3.6 6.8 L7.2 2.6" fill="none" stroke="#e03a28" stroke-width="1.6"/><path d="M1.4 10.8 L3.6 12.8 L7.4 8.8" fill="none" stroke="#e03a28" stroke-width="1.6"/><path d="M8.4 10.8 L10.6 12.8 L14.4 8.6" fill="none" stroke="#e03a28" stroke-width="1.6"/><text x="11.4" y="7.8" font-family="Liberation Sans" font-weight="bold" font-size="9" fill="#a21ea2" text-anchor="middle">?</text></svg>
<div class="t" style="left:26.49px;top:465px;height:23px;line-height:23px;letter-spacing:0.037px;">Mul<u>t</u>iple Imputation</div>
<div class="arr" style="left:229px;top:470.2px"></div>
<div class="t" style="left:26.88px;top:488px;height:23px;line-height:23px;letter-spacing:0.155px;">Comp<u>l</u>ex Samples</div>
<div class="arr" style="left:229px;top:493.2px"></div>
<div class="t" style="left:24.94px;top:511px;height:25px;line-height:25px;letter-spacing:0.092px;">S<u>i</u>mulation...</div>
<svg class="a" style="left:5px;top:514px" width="16" height="16" viewBox="0 0 16 16"><rect x="0" y="0" width="13" height="13" fill="#0d78d8"/><rect x="1" y="1" width="3" height="2" fill="#d6e6f4"/><rect x="1" y="4" width="3" height="2" fill="#d6e6f4"/><rect x="1" y="7" width="3" height="2" fill="#d6e6f4"/><rect x="1" y="10" width="3" height="2" fill="#d6e6f4"/><rect x="5" y="1" width="3" height="2" fill="#d6e6f4"/><rect x="5" y="4" width="3" height="2" fill="#d6e6f4"/><rect x="5" y="7" width="3" height="2" fill="#d6e6f4"/><rect x="5" y="10" width="3" height="2" fill="#d6e6f4"/><rect x="9" y="1" width="3" height="2" fill="#d6e6f4"/><rect x="9" y="4" width="3" height="2" fill="#d6e6f4"/><rect x="9" y="7" width="3" height="2" fill="#d6e6f4"/><rect x="9" y="10" width="3" height="2" fill="#d6e6f4"/><rect x="4.5" y="6.5" width="11" height="9" fill="url(#gS1)" stroke="#0d78d8" stroke-width="1"/><rect x="9.6" y="8" width="4.4" height="0.9" fill="#0d78d8"/><rect x="6" y="9.1" width="3" height="0.9" fill="#0d78d8"/><rect x="9.4" y="10" width="2.6" height="0.9" fill="#0d78d8"/><rect x="7.2" y="11" width="1.8" height="0.9" fill="#0d78d8"/><rect x="9.4" y="12" width="1.4" height="0.9" fill="#0d78d8"/><rect x="8" y="13" width="1" height="0.9" fill="#0d78d8"/><rect x="8.8" y="8" width="0.8" height="7" fill="#0d78d8"/></svg>
<div class="t" style="left:26.92px;top:536px;height:23px;line-height:23px;letter-spacing:-0.060px;"><u>Q</u>uality Control</div>
<div class="arr" style="left:229px;top:541.2px"></div>
<div class="t" style="left:26.94px;top:559px;height:23px;line-height:23px;letter-spacing:0.012px;"><u>S</u>patial and Temporal Modeling...</div>
<div class="arr" style="left:229px;top:564.2px"></div>
<div class="t" style="left:26.49px;top:582px;height:23px;line-height:23px;letter-spacing:-0.043px;">Direct Mar<u>k</u>eting</div>
<div class="arr" style="left:229px;top:587.2px"></div>
</div>
<div class="menu" style="left:504px;top:234px;width:249px;height:361px">
<div class="t" style="left:24.98px;top:3px;height:25px;line-height:25px;letter-spacing:-0.038px;"><u>A</u>utomatic Linear Modeling...</div>
<svg class="a" style="left:5px;top:6px" width="16" height="16" viewBox="0 0 16 16"><rect x="0.5" y="0.5" width="15" height="15" fill="url(#gA1)" stroke="#1c3d92" stroke-width="1"/><path d="M1.5 1 L4 1 L4 13 L15 13 L15 15 L1.5 15 Z" fill="#fff"/><path d="M4 11.7 L15 4.8" stroke="#fcc62c" stroke-width="2"/></svg>
<div class="t" style="left:24.49px;top:28px;height:25px;line-height:25px;letter-spacing:0.099px;"><u>L</u>inear...</div>
<svg class="a" style="left:5px;top:31px" width="16" height="16" viewBox="0 0 16 16"><rect x="0.5" y="0.5" width="15" height="15" fill="url(#gR1)" stroke="#2f5fb0" stroke-width="1"/><text x="8.2" y="8.1" font-family="Liberation Sans" font-weight="bold" font-size="8.8" fill="#fff" stroke="#fff" stroke-width="0.45" text-anchor="middle">R</text><text x="8" y="14.2" font-family="Liberation Sans" font-weight="bold" font-size="6.4" fill="#f8f83c" stroke="#f8f83c" stroke-width="0.4" text-anchor="middle" textLength="10.5" lengthAdjust="spacingAndGlyphs">LIN</text></svg>
<div class="t" style="left:24.68px;top:53px;height:25px;line-height:25px;letter-spacing:0.008px;"><u>C</u>urve Estimation...</div>
<svg class="a" style="left:5px;top:56px" width="16" height="16" viewBox="0 0 16 16"><rect x="0.5" y="0.5" width="15" height="15" fill="url(#gV1)" stroke="#1c3d92" stroke-width="1"/><path d="M1.6 13.8 L4 11.2 L6.6 11.4 L7.4 8.4 L9.6 8 L10.2 5 L12.2 4.6 L13 1.6" fill="none" stroke="#d8202a" stroke-width="1.5"/></svg>
<div class="t" style="left:24.59px;top:78px;height:25px;line-height:25px;letter-spacing:0.060px;">Partial Lea<u>s</u>t Squares...</div>
<svg class="a" style="left:5px;top:81px" width="16" height="16" viewBox="0 0 16 16"><rect x="0.5" y="0.5" width="15" height="15" fill="url(#gR1)" stroke="#2f5fb0" stroke-width="1"/><text x="8.2" y="8.1" font-family="Liberation Sans" font-weight="bold" font-size="8.8" fill="#fff" stroke="#fff" stroke-width="0.45" text-anchor="middle">R</text><text x="8" y="14.2" font-family="Liberation Sans" font-weight="bold" font-size="6.4" fill="#f8f83c" stroke="#f8f83c" stroke-width="0.4" text-anchor="middle" textLength="10.5" lengthAdjust="spacingAndGlyphs">PLS</text></svg>
<div class="hl" style="left:2px;top:103px;width:243px;height:25px"></div>
<div class="t" style="left:24.59px;top:104px;height:25px;line-height:25px;letter-spacing:-0.231px;">PROCESS v4.0 by Andrew F. Hayes</div>
<div class="t" style="left:24.59px;top:130px;height:25px;line-height:25px;letter-spacing:-0.006px;">Binary Lo<u>g</u>istic...</div>
<svg class="a" style="left:5px;top:133px" width="16" height="16" viewBox="0 0 16 16"><rect x="0.5" y="0.5" width="15" height="15" fill="url(#gR1)" stroke="#2f5fb0" stroke-width="1"/><text x="8.2" y="8.1" font-family="Liberation Sans" font-weight="bold" font-size="8.8" fill="#fff" stroke="#fff" stroke-width="0.45" text-anchor="middle">R</text><text x="8" y="14.2" font-family="Liberation Sans" font-weight="bold" font-size="6.4" fill="#f8f83c" stroke="#f8f83c" stroke-width="0.4" text-anchor="middle" textLength="10.5" lengthAdjust="spacingAndGlyphs">LOG</text></svg>
<div class="t" style="left:24.49px;top:155px;height:25px;line-height:25px;letter-spacing:0.080px;"><u>M</u>ultinomial Logistic...</div>
<svg class="a" style="left:5px;top:158px" width="16" height="16" viewBox="0 0 16 16"><rect x="0.5" y="0.5" width="15" height="15" fill="url(#gR1)" stroke="#2f5fb0" stroke-width="1"/><text x="8.2" y="8.1" font-family="Liberation Sans" font-weight="bold" font-size="8.8" fill="#fff" stroke="#fff" stroke-width="0.45" text-anchor="middle">R</text><text x="8" y="14.2" font-family="Liberation Sans" font-weight="bold" font-size="5.6" fill="#f8f83c" stroke="#f8f83c" stroke-width="0.4" text-anchor="middle" textLength="13" lengthAdjust="spacingAndGlyphs">MULT</text></svg>
<div class="t" style="left:24.72px;top:180px;height:25px;line-height:25px;letter-spacing:0.011px;">Or<u>d</u>inal...</div>
<svg class="a" style="left:5px;top:183px" width="16" height="16" viewBox="0 0 16 16"><rect x="0.5" y="0.5" width="15" height="15" fill="url(#gR1)" stroke="#2f5fb0" stroke-width="1"/><text x="8.2" y="8.1" font-family="Liberation Sans" font-weight="bold" font-size="8.8" fill="#fff" stroke="#fff" stroke-width="0.45" text-anchor="middle">R</text><text x="8" y="14.2" font-family="Liberation Sans" font-weight="bold" font-size="6.4" fill="#f8f83c" stroke="#f8f83c" stroke-width="0.4" text-anchor="middle" textLength="10.5" lengthAdjust="spacingAndGlyphs">ORD</text></svg>
<div class="t" style="left:24.59px;top:205px;height:25px;line-height:25px;letter-spacing:-0.031px;"><u>P</u>robit...</div>
<svg class="a" style="left:5px;top:208px" width="16" height="16" viewBox="0 0 16 16"><rect x="0.5" y="0.5" width="15" height="15" fill="url(#gR1)" stroke="#2f5fb0" stroke-width="1"/><text x="8.2" y="8.1" font-family="Liberation Sans" font-weight="bold" font-size="8.8" fill="#fff" stroke="#fff" stroke-width="0.45" text-anchor="middle">R</text><text x="8" y="14.2" font-family="Liberation Sans" font-weight="bold" font-size="5.6" fill="#f8f83c" stroke="#f8f83c" stroke-width="0.4" text-anchor="middle" textLength="13" lengthAdjust="spacingAndGlyphs">PROB</text></svg>
<div class="t" style="left:24.59px;top:231px;height:25px;line-height:25px;letter-spacing:0.112px;"><u>N</u>onlinear...</div>
<svg class="a" style="left:5px;top:234px" width="16" height="16" viewBox="0 0 16 16"><rect x="0.5" y="0.5" width="15" height="15" fill="url(#gR1)" stroke="#2f5fb0" stroke-width="1"/><text x="8.2" y="8.1" font-family="Liberation Sans" font-weight="bold" font-size="8.8" fill="#fff" stroke="#fff" stroke-width="0.45" text-anchor="middle">R</text><text x="8" y="14.2" font-family="Liberation Sans" font-weight="bold" font-size="6.4" fill="#f8f83c" stroke="#f8f83c" stroke-width="0.4" text-anchor="middle" textLength="10.5" lengthAdjust="spacingAndGlyphs">NLR</text></svg>
<div class="t" style="left:25.05px;top:256px;height:25px;line-height:25px;letter-spacing:0.016px;"><u>W</u>eight Estimation...</div>
<svg class="a" style="left:5px;top:259px" width="16" height="16" viewBox="0 0 16 16"><rect x="0.5" y="0.5" width="15" height="15" fill="url(#gR1)" stroke="#2f5fb0" stroke-width="1"/><text x="8.2" y="8.1" font-family="Liberation Sans" font-weight="bold" font-size="8.8" fill="#fff" stroke="#fff" stroke-width="0.45" text-anchor="middle">R</text><text x="8" y="14.2" font-family="Liberation Sans" font-weight="bold" font-size="6.4" fill="#f8f83c" stroke="#f8f83c" stroke-width="0.4" text-anchor="middle" textLength="10.5" lengthAdjust="spacingAndGlyphs">WLS</text></svg>
<div class="t" style="left:24.68px;top:281px;height:25px;line-height:25px;letter-spacing:0.034px;"><u>2</u>-Stage Least Squares...</div>
<svg class="a" style="left:5px;top:284px" width="16" height="16" viewBox="0 0 16 16"><rect x="0.5" y="0.5" width="15" height="15" fill="url(#gR1)" stroke="#2f5fb0" stroke-width="1"/><text x="8.2" y="8.1" font-family="Liberation Sans" font-weight="bold" font-size="8.8" fill="#fff" stroke="#fff" stroke-width="0.45" text-anchor="middle">R</text><text x="8" y="14.2" font-family="Liberation Sans" font-weight="bold" font-size="5.6" fill="#f8f83c" stroke="#f8f83c" stroke-width="0.4" text-anchor="middle" textLength="13" lengthAdjust="spacingAndGlyphs">2SLS</text></svg>
<div class="t" style="left:24.72px;top:307px;height:25px;line-height:25px;letter-spacing:-0.006px;"><u>Q</u>uantile...</div>
<svg class="a" style="left:5px;top:310px" width="16" height="16" viewBox="0 0 16 16"><rect x="0.5" y="0.5" width="15" height="15" fill="url(#gR1)" stroke="#2f5fb0" stroke-width="1"/><text x="8.2" y="8.1" font-family="Liberation Sans" font-weight="bold" font-size="8.8" fill="#fff" stroke="#fff" stroke-width="0.45" text-anchor="middle">R</text><text x="8" y="14.2" font-family="Liberation Sans" font-weight="bold" font-size="5.6" fill="#f8f83c" stroke="#f8f83c" stroke-width="0.4" text-anchor="middle" textLength="13" lengthAdjust="spacingAndGlyphs">QUAN</text></svg>
<div class="t" style="left:24.72px;top:333px;height:25px;line-height:25px;letter-spacing:-0.083px;"><u>O</u>ptimal Scaling (CATREG)...</div>
<div class="sep" style="left:2px;top:102px;width:243px"></div>
<div class="sep" style="left:2px;top:128px;width:243px"></div>
<div class="sep" style="left:2px;top:229px;width:243px"></div>
<div class="sep" style="left:2px;top:305px;width:243px"></div>
<div class="sep" style="left:2px;top:331px;width:243px"></div>
</div>
</body></html>
